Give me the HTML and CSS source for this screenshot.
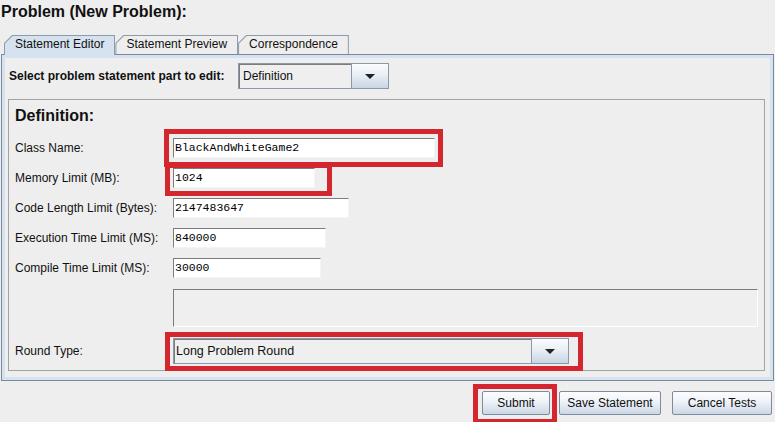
FILE: index.html
```html
<!DOCTYPE html>
<html>
<head>
<meta charset="utf-8">
<link rel="stylesheet" href="styles.css">
</head>
<body>
<div class="title">Problem (New Problem):</div>
<div class="tabs">
  <div class="tab active"><span>Statement Editor</span></div>
  <div class="tab"><span>Statement Preview</span></div>
  <div class="tab"><span>Correspondence</span></div>
</div>
<div class="panel">
  <div class="panel-body">
    <div class="select-row">
      <span class="select-label">Select problem statement part to edit:</span>
      <div class="combo combo-part">
        <div class="combo-text">Definition</div>
        <div class="combo-btn"><i class="arrow"></i></div>
      </div>
    </div>
    <div class="def">
      <h2 class="def-title">Definition:</h2>
      <div class="form">
        <label class="lbl">Class Name:</label>
        <div class="cell"><span class="mark"><span class="field w-class">BlackAndWhiteGame2</span><span class="redbox rb-class"></span></span></div>

        <label class="lbl">Memory Limit (MB):</label>
        <div class="cell"><span class="mark"><span class="field w-mem">1024</span><span class="redbox rb-mem"></span></span></div>

        <label class="lbl">Code Length Limit (Bytes):</label>
        <div class="cell"><span class="field w-code">2147483647</span></div>

        <label class="lbl">Execution Time Limit (MS):</label>
        <div class="cell"><span class="field w-exec">840000</span></div>

        <label class="lbl">Compile Time Limit (MS):</label>
        <div class="cell"><span class="field w-comp">30000</span></div>

        <span class="lbl"></span>
        <div class="cell cell-area"><div class="area"></div></div>

        <label class="lbl last">Round Type:</label>
        <div class="cell last"><span class="mark"><div class="combo combo-round">
          <div class="combo-text">Long Problem Round</div>
          <div class="combo-btn"><i class="arrow"></i></div>
        </div><span class="redbox rb-round"></span></span></div>
      </div>
    </div>
  </div>
</div>
<div class="actions">
  <span class="mark"><button class="btn b-submit">Submit</button><span class="redbox rb-submit"></span></span>
  <button class="btn b-save">Save Statement</button>
  <button class="btn b-cancel">Cancel Tests</button>
</div>
</body>
</html>
```

FILE: styles.css
```css
html, body {
  margin: 0;
  padding: 0;
}
body {
  width: 775px;
  height: 422px;
  overflow: hidden;
  background: #eeeeee;
  font-family: "Liberation Sans", Arial, sans-serif;
  font-size: 12px;
  color: #000;
}

.title {
  height: 35px;
  box-sizing: border-box;
  padding: 3px 0 0 1px;
  font-size: 16px;
  font-weight: bold;
  line-height: 18px;
  color: #111;
}

/* tabs */
.tabs {
  display: flex;
  align-items: flex-start;
  height: 19px;
  padding-left: 4px;
}
.tab {
  height: 19px;
  box-sizing: border-box;
  padding: 1px 1px 0 1px;
  background: #8d9bab;
  clip-path: polygon(0 8px, 8px 0, 100% 0, 100% 100%, 0 100%);
}
.tab span {
  display: block;
  height: 100%;
  padding: 0 10px;
  line-height: 17px;
  background: #eeeeee;
  color: #111;
  white-space: nowrap;
  clip-path: polygon(0 7.6px, 7.6px 0, 100% 0, 100% 100%, 0 100%);
}
.tab.active {
  height: 20px;
  position: relative;
  z-index: 1;
}
.tab.active span {
  background: #d6e2ef;
}

/* main panel */
.panel {
  margin: 0 1px;
  border: 1px solid #788a9c;
}
.panel-body {
  border: 3px solid #d6e2ef;
  padding: 5px 5px 6px 3px;
}
.select-row {
  display: flex;
  align-items: center;
  height: 26px;
}
.select-label {
  width: 229px;
  margin-left: 1px;
  font-weight: bold;
  color: #111;
}

.combo {
  display: flex;
  height: 26px;
  box-sizing: border-box;
  border: 1px solid #8a98a8;
}
.combo-part { width: 151px; }
.combo-round { width: 396px; }
.combo-text {
  flex: 1;
  background: #efefef;
  border-top: 1px solid #7d7d7d;
  border-left: 1px solid #7d7d7d;
  padding-left: 3px;
  line-height: 23px;
  color: #111;
}
.combo-round .combo-text {
  font-size: 12.5px;
  padding-left: 1px;
}
.combo-btn {
  width: 36px;
  border-left: 1px solid #8a98a8;
  background: linear-gradient(#fbfcfe, #e9eff6 45%, #c8d5e4);
  display: flex;
  align-items: center;
  justify-content: center;
}
.arrow {
  display: block;
  width: 0;
  height: 0;
  border-left: 5px solid transparent;
  border-right: 5px solid transparent;
  border-top: 5px solid #222;
}

/* definition panel */
.def {
  margin-top: 10px;
  border: 1px solid #a2a2a2;
  padding: 7px 0 1px 6px;
}
.def-title {
  margin: 0;
  font-size: 16px;
  line-height: 18px;
  font-weight: bold;
  color: #111;
}
.form {
  margin-top: 8px;
  display: grid;
  grid-template-columns: 158px 1fr;
  grid-template-rows: 30px 30px 30px 30px 30px 44px 42px;
  align-items: center;
}
.lbl {
  color: #111;
}
.cell {
  display: flex;
  align-items: center;
}
.cell-area {
  align-self: end;
}
.last {
  align-self: stretch;
  display: flex;
  align-items: center;
  padding-top: 6px;
  box-sizing: border-box;
}

.field {
  display: block;
  height: 20px;
  box-sizing: border-box;
  background: #fff;
  border: 1px solid;
  border-color: #7c7c7c #f4f4f4 #f4f4f4 #7c7c7c;
  padding-left: 1px;
  font-family: "Liberation Mono", "Courier New", monospace;
  font-size: 11.5px;
  line-height: 18px;
  color: #000;
}
.w-class { width: 262px; }
.w-mem { width: 142px; }
.w-code { width: 176px; }
.w-exec { width: 153px; }
.w-comp { width: 148px; }

.area {
  width: 585px;
  height: 38px;
  box-sizing: border-box;
  background: #efefef;
  border: 1px solid;
  border-color: #7c7c7c #ffffff #ffffff #7c7c7c;
}

/* red annotation boxes */
.mark {
  position: relative;
  display: inline-block;
}
.redbox {
  position: absolute;
  border: 5px solid #d3262e;
  pointer-events: none;
}
.rb-class { left: -9px; right: -8px; top: -9px; bottom: -9px; }
.rb-mem { left: -8px; right: -17px; top: -5px; bottom: -8px; }
.rb-round { left: -8px; right: -14px; top: -6px; bottom: -7px; }
.rb-submit { left: -9px; right: -7px; top: -7px; bottom: -9px; }

/* buttons */
.actions {
  display: flex;
  justify-content: flex-end;
  gap: 9px;
  margin-top: 10px;
  padding-right: 3px;
}
.btn {
  display: block;
  height: 24px;
  margin: 0;
  padding: 0;
  box-sizing: border-box;
  border: 1px solid #7d8b9c;
  border-radius: 2px;
  background: linear-gradient(#fdfdfe, #eef2f8 45%, #cbd7e5);
  font-family: "Liberation Sans", Arial, sans-serif;
  font-size: 12px;
  color: #111;
}
.b-submit { width: 68px; }
.b-save { width: 102px; }
.b-cancel { width: 100px; margin-left: 2px; }
```
